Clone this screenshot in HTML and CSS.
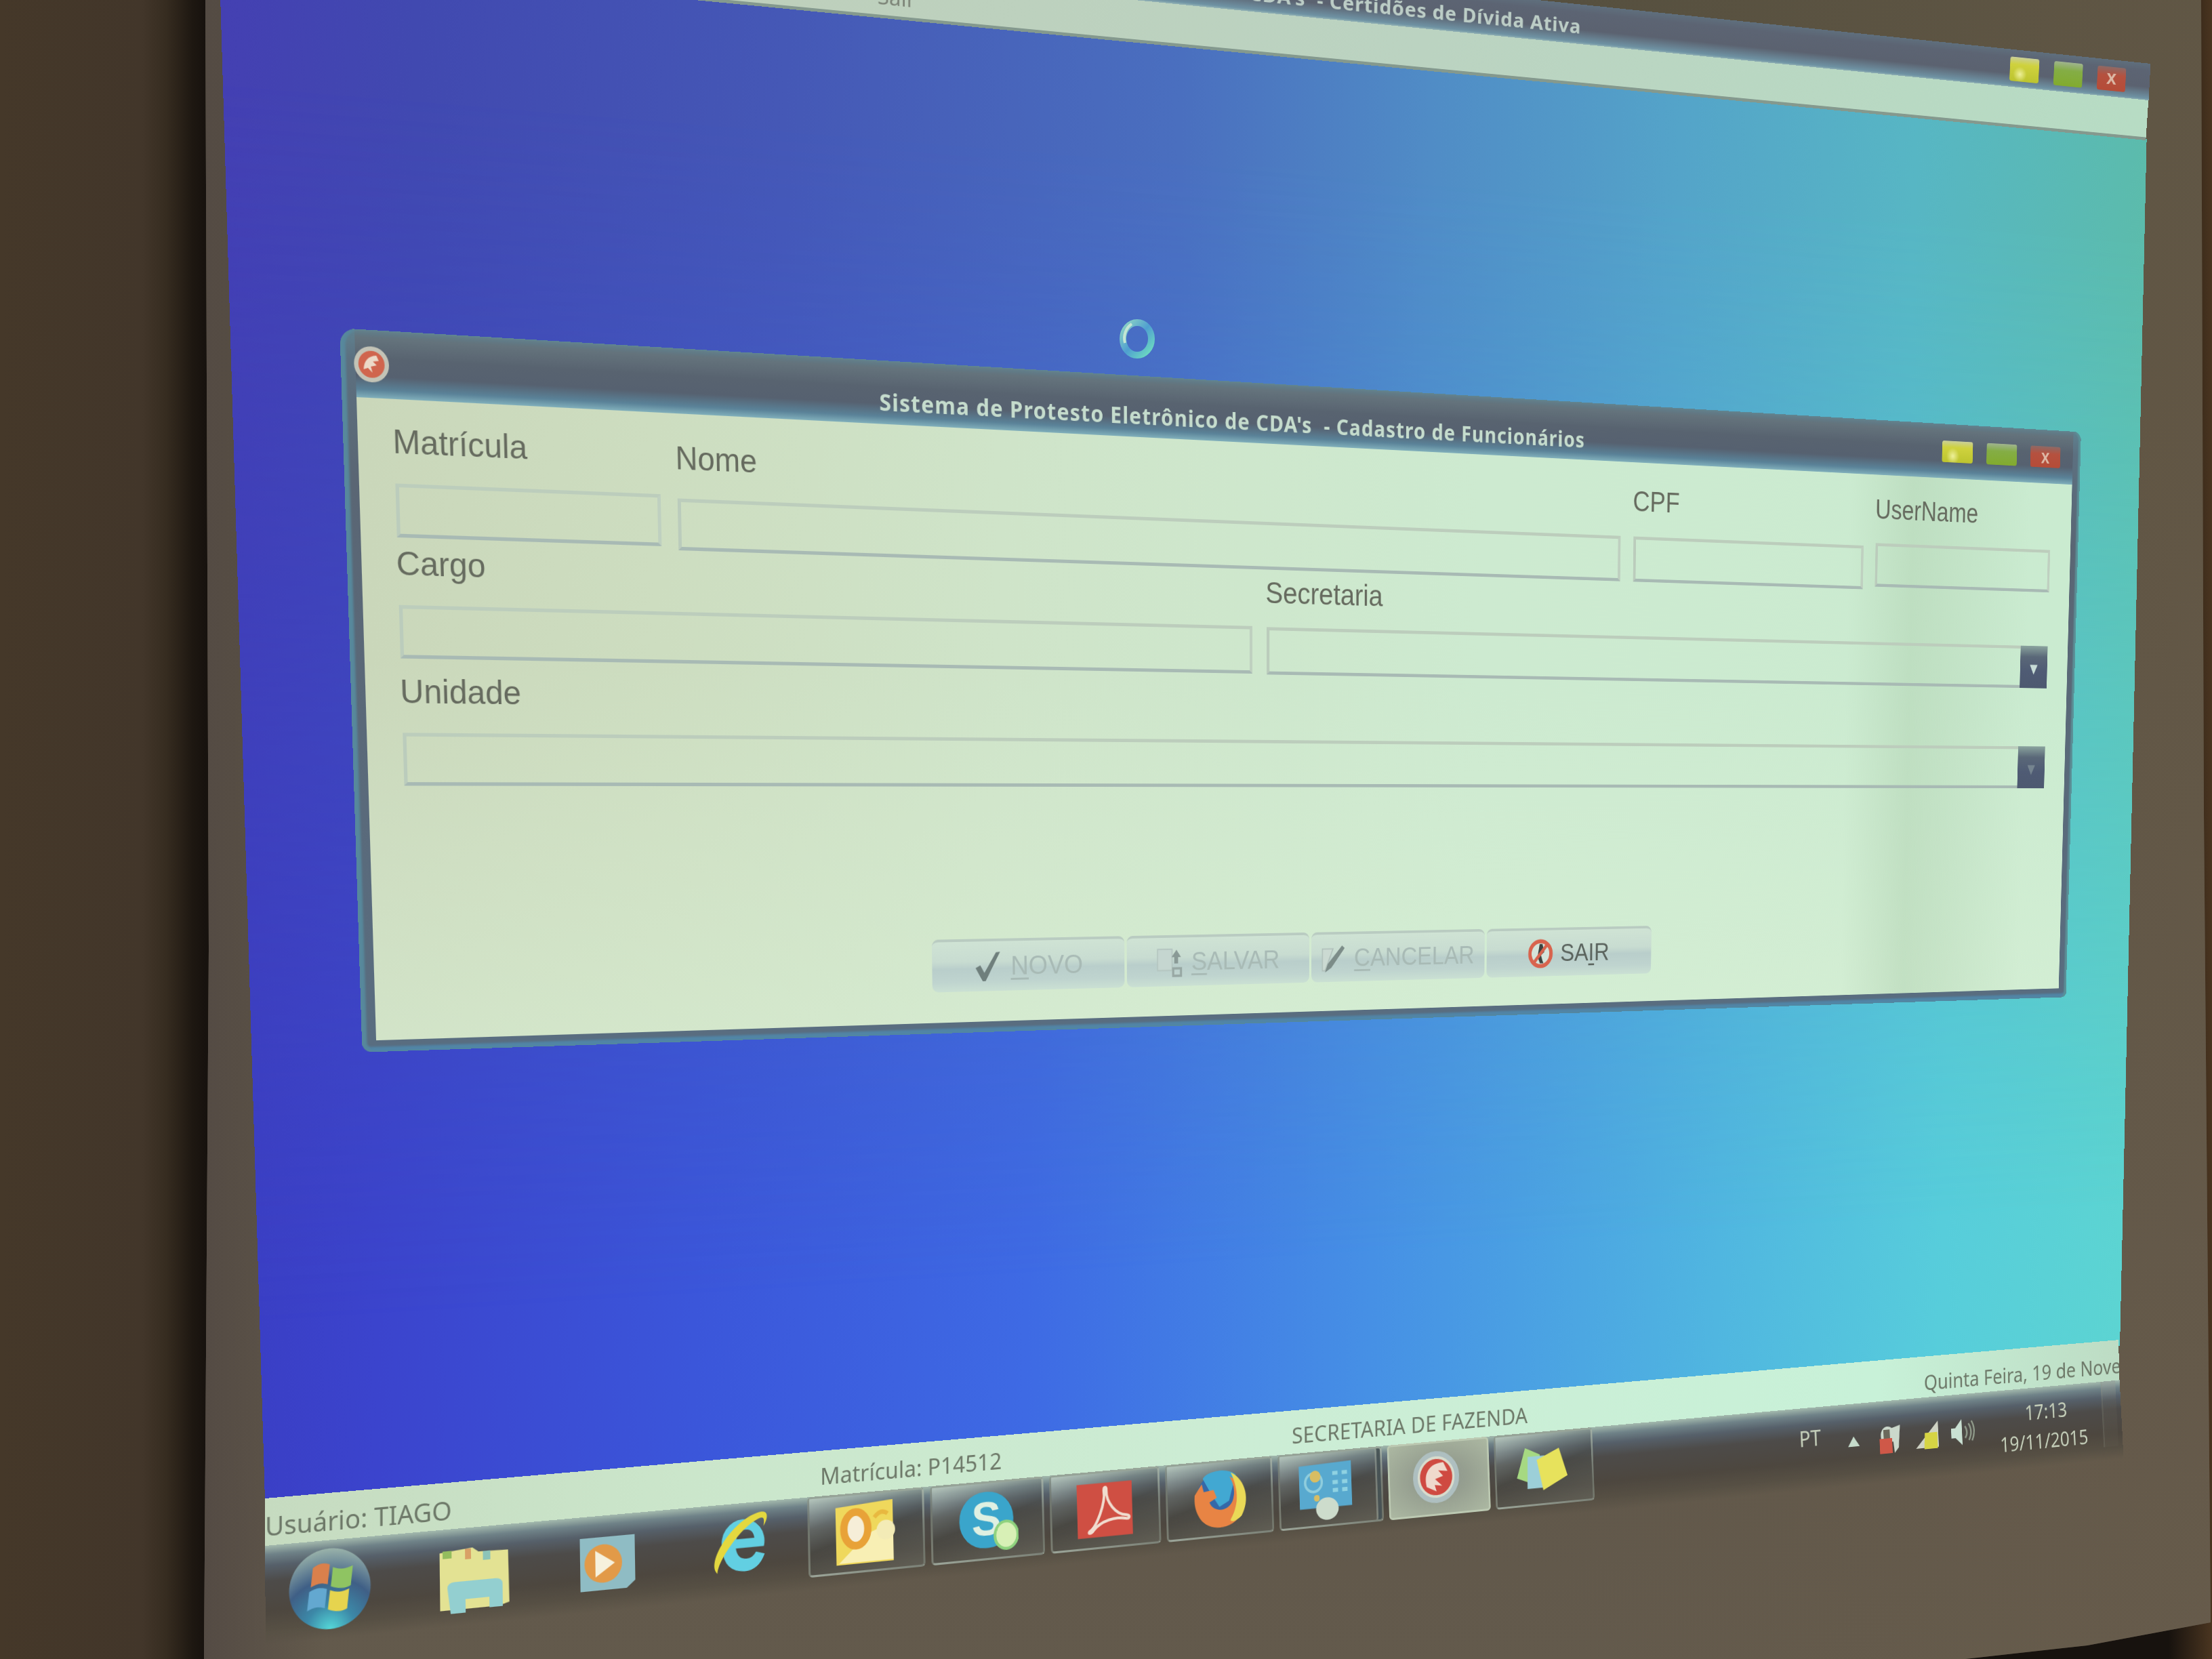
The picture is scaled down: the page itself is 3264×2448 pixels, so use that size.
FILE: index.html
```html
<!DOCTYPE html>
<html lang="pt-BR">
<head>
<meta charset="utf-8">
<title>Sistema de Protesto Eletrônico de CDA's</title>
<link rel="stylesheet" href="styles.css">
</head>
<body>
<main class="wall">
  <div class="screen"></div>

  <section class="plane desktop" data-quad="323,-75 3167,205 3127,1985 391,2216"></section>

  <header class="plane app-title" data-quad="318,-203 3173,94 3170,150 320,-133">
    <h1 class="app-name">Sistema de Protesto Eletrônico de CDA's&nbsp; - Certidões de Dívida Ativa</h1>
    <div class="controls">
      <i class="ctl yellow"></i><i class="ctl green"></i><i class="ctl red">x</i>
    </div>
  </header>
  <nav class="plane app-menu" data-quad="320,-134 3170,148 3166,207 322,-68">
    <span>Sair</span>
  </nav>

  <svg class="busy" viewBox="0 0 60 64">
    <defs><linearGradient id="ring" x1="0" y1="0" x2="1" y2="1"><stop offset="0" stop-color="#8fd6c4"/><stop offset=".5" stop-color="#4f9fd0"/><stop offset="1" stop-color="#6fe0bf"/></linearGradient></defs>
    <ellipse cx="30" cy="32" rx="21" ry="24" fill="none" stroke="url(#ring)" stroke-width="10"/>
    <path d="M12 38a21 24 0 0 1 10-28" fill="none" stroke="#c4e6d4" stroke-width="4"/>
  </svg>

  <section class="plane window" data-box="20,91,3000,880" data-quad="526,586 3057,715 3037,1458 555,1535">
    <header class="win-title">
      <svg class="win-icon" viewBox="0 0 50 50"><circle cx="25" cy="25" r="24" fill="#c3c3b6"/><circle cx="25" cy="25" r="18" fill="#d0654e"/><path d="M14 32c1-12 7-18 18-19l3 7-8 1 5 5-8 2 2 8-6-6z" fill="#ecd9c8"/></svg>
      <h2 class="win-name">Sistema de Protesto Eletrônico de CDA's&nbsp; - Cadastro de Funcionários</h2>
      <div class="controls">
        <i class="ctl yellow"></i><i class="ctl green"></i><i class="ctl red">x</i>
      </div>
    </header>
    <form class="form">
      <div class="row row-person">
        <label class="field"><span>Matrícula</span><b class="box"></b></label>
        <label class="field mid"><span>Nome</span><b class="box"></b></label>
        <label class="field mid"><span>CPF</span><b class="box"></b></label>
        <label class="field"><span>UserName</span><b class="box"></b></label>
      </div>
      <div class="row row-job">
        <label class="field"><span>Cargo</span><b class="box"></b></label>
        <label class="field mid"><span>Secretaria</span><b class="box combo"><i class="drop">▾</i></b></label>
      </div>
      <div class="row row-unit">
        <label class="field"><span>Unidade</span><b class="box combo"><i class="drop dim">▾</i></b></label>
      </div>
      <div class="actions">
        <span class="btn off"><svg viewBox="0 0 46 52"><path d="M2 28l8-4 7 12L37 4l7-1-25 46h-5z" fill="#6f7f7c"/></svg><span><u>N</u>OVO</span></span>
        <span class="btn off"><svg viewBox="0 0 46 52"><path d="M2 5h26v34H2z" fill="#c5d6d0" stroke="#b4c5c0" stroke-width="2"/><path d="M36 6l8 12h-5v10h-7V18h-5z" fill="#8a9a96"/><path d="M30 36h14v12H30z" fill="none" stroke="#98a8a4" stroke-width="4"/></svg><span><u>S</u>ALVAR</span></span>
        <span class="btn off"><svg viewBox="0 0 46 52"><path d="M3 10h20L8 46H3z" fill="#cbdad2" stroke="#b0c0ba" stroke-width="2"/><path d="M40 5l5 4-25 32-12 8 5-14z" fill="#7c8c88"/></svg><span><u>C</u>ANCELAR</span></span>
        <span class="btn"><svg viewBox="0 0 52 52"><circle cx="26" cy="26" r="22" fill="#d5e4da" stroke="#d8634d" stroke-width="7"/><path d="M24 9h6l4 14-7 6 5 14h-7l-5-11z" fill="#3c4240"/><path d="M40 10L12 42" stroke="#d8634d" stroke-width="6"/></svg><span>SA<u>I</u>R</span></span>
      </div>
    </form>
  </section>

  <footer class="plane status" data-quad="391,2211 3126,1977 3127,2037 391,2282">
    <span class="st-user">Usuário: TIAGO</span>
    <span class="st-id">Matrícula: P14512</span>
    <span class="st-dept">SECRETARIA DE FAZENDA</span>
    <span class="st-date">Quinta Feira, 19 de Novembro</span>
  </footer>

  <nav class="plane taskbar" data-quad="391,2281 3127,2036 3133,2152 392,2428">
    <div class="pins">
      <svg class="orb" viewBox="0 0 110 110"><defs><radialGradient id="orb" cx=".5" cy="1" r="1"><stop offset="0" stop-color="#55d8d8"/><stop offset=".3" stop-color="#3c89a8"/><stop offset=".62" stop-color="#3f5f86"/><stop offset="1" stop-color="#9ab3aa"/></radialGradient></defs><circle cx="55" cy="55" r="53" fill="url(#orb)"/><path d="M33 26c8-6 15-6 22-3l-3 26c-8-3-14-2-22 2z" fill="#d9804c"/><path d="M59 27c9 4 16 4 26 0l-3 26c-9 4-17 3-26-1z" fill="#8fc462"/><path d="M28 57c9-5 15-5 23-2l-3 25c-8-3-14-3-23 2z" fill="#63a8d0"/><path d="M55 57c9 4 16 4 25 0l-3 26c-9 4-16 3-25-1z" fill="#e6d44e"/></svg>
      <svg class="folder" viewBox="0 0 98 90"><path d="M4 6l44-4 8 6 40 1 1 70-14 4H4z" fill="#e3e293"/><path d="M8 4h12v10H8z" fill="#94bd5e"/><path d="M38 3h8v14h-8z" fill="#d9a066"/><path d="M62 8h10v12H62z" fill="#8cc4b8"/><path d="M14 54q0-8 10-8h54q10 0 10 8v30H70V70H38v18H18z" fill="#93cfd0"/></svg>
      <svg class="player" viewBox="0 0 80 76"><path d="M2 2h76v62l-12 10H2z" fill="#8fbcc4"/><circle cx="34" cy="38" r="26" fill="#e29a48"/><path d="M23 20l27 18-27 18z" fill="#f6f1dc"/></svg>
      <svg class="ie" viewBox="0 0 92 94"><path d="M20 54a32 33 0 1 1 62 0H40q2 16 16 16 9 0 14-9l13 4Q74 88 52 88 22 86 20 54zm21-13h27q-2-13-13-13t-14 13z" fill="#62cfe2"/><path d="M12 88C-6 72 34 14 74 5c16-4 16 8 8 20 2-12 0-14-8-11C48 24 12 70 12 88z" fill="#e4d83f"/></svg>
    </div>
    <div class="tasks">
      <span class="task bright"><svg viewBox="0 0 90 92"><path d="M2 8L88 2v88H2z" fill="#efd85c"/><path d="M50 48l38-14v54H6z" fill="#f8efb4"/><ellipse cx="32" cy="40" rx="18" ry="24" fill="#f6eed8" stroke="#e8a238" stroke-width="11"/><path d="M60 26q10-12 20-4" fill="none" stroke="#e8b840" stroke-width="6"/><circle cx="77" cy="45" r="14" fill="#f3ebb6"/></svg></span>
      <span class="task"><svg viewBox="0 0 90 86"><rect x="3" y="3" width="80" height="78" rx="38" fill="#3aa5cb"/><text x="43" y="63" class="glyph" text-anchor="middle">S</text><ellipse cx="72" cy="65" rx="17" ry="19" fill="#d8f0b6" stroke="#8fd27e" stroke-width="4"/></svg></span>
      <span class="task"><svg viewBox="0 0 90 86"><path d="M2 5h84v76H2z" fill="#cf4f43"/><path d="M20 72c10-4 26-38 23-56 0-6 5-6 4 0-1 17 14 36 30 37 6 1 5 6-1 5-16-4-38 0-50 13-4 5-9 4-6 1z" fill="none" stroke="#f0dccf" stroke-width="4"/></svg></span>
      <span class="task"><svg viewBox="0 0 90 92"><circle cx="45" cy="44" r="38" fill="#3568a8"/><path d="M18 14C26 2 60 0 72 12L60 50 44 58 30 36z" fill="#42a8d2"/><path d="M4 38l12-16 3 12 16-2 5 12-12 6c5 16 32 18 39-2 4-14 0-24-5-34 20 10 28 32 21 50-10 30-58 34-73 6C4 60 3 50 4 38z" fill="#e88444"/><path d="M64 8c26 14 30 44 16 66-12 10-20 8-18 4 12-18 16-40 2-70z" fill="#ead957"/></svg></span>
      <span class="task stacked"><svg viewBox="0 0 94 92"><path d="M2 6l88-3v68H2z" fill="#58a9cf"/><circle cx="26" cy="32" r="14" fill="none" stroke="#8fcddd" stroke-width="4"/><circle cx="29" cy="23" r="9" fill="#d8bd62"/><path d="M58 20h9M74 20h9M58 34h9M74 34h9M58 46h9M74 46h9" stroke="#8fd2e2" stroke-width="6"/><circle cx="31" cy="56" r="5" fill="#d8bd62"/><ellipse cx="48" cy="73" rx="19" ry="17" fill="#cddccc"/></svg></span>
      <span class="task active"><svg viewBox="0 0 84 84"><circle cx="42" cy="42" r="36" fill="#d8dccd" stroke="#aebfc0" stroke-width="8"/><circle cx="42" cy="42" r="28" fill="#cf4a41"/><path d="M25 56c-5-22 6-36 30-36l7 14-16-2 8 9-14 4 12 11-13-2 3 10z" fill="#efd9cc"/></svg></span>
      <span class="task"><svg viewBox="0 0 94 72"><path d="M18 2l26 12-6 48L2 48z" fill="#a6d982"/><path d="M22 16h30l-4 50H20z" fill="#9ccfd8"/><path d="M38 22l40-16 14 44-44 20z" fill="#e7e25c"/></svg></span>
    </div>
    <div class="tray">
      <span class="lang">PT</span>
      <svg class="up" viewBox="0 0 22 16"><path d="M11 0l11 16H0z" fill="#c6dccb"/></svg>
      <svg class="flag" viewBox="0 0 44 46"><path d="M6 26C0 6 16-2 26 6l16-4-4 36-8 8-2-18z" fill="#cbd8cb"/><path d="M10 8h12v14H10z" fill="#6b695c"/><path d="M2 22h24v24H2z" fill="#cf5848"/></svg>
      <svg class="net" viewBox="0 0 46 46"><path d="M44 0v42H0z" fill="#cfd3c4"/><path d="M18 18h24v26H16z" fill="#d6d444"/></svg>
      <svg class="vol" viewBox="0 0 46 42"><path d="M0 14h8L21 0v42L8 30H0z" fill="#c9e0d2"/><path d="M27 12q7 10 0 19M34 8q9 13 0 27M40 4q9 16 0 32" fill="none" stroke="#8f9a8a" stroke-width="3"/></svg>
      <div class="clock"><span>17:13</span><span>19/11/2015</span></div>
      <i class="peek"></i>
    </div>
  </nav>
</main>
<script src="planes.js"></script>
</body>
</html>
```

FILE: styles.css
```css
* { box-sizing: border-box; }
html, body { margin: 0; }
body {
  width: 3264px;
  height: 2448px;
  overflow: hidden;
  font-family: "Liberation Sans", Arial, sans-serif;
}
h1, h2 { margin: 0; }
i, b { font-style: normal; font-weight: normal; }

/* room wall and the projection canvas */
.wall {
  position: relative;
  width: 3264px;
  height: 2448px;
  overflow: hidden;
  background: linear-gradient(90deg, #453829 0, #42362a 210px, #362c20 245px, #1d1711 285px, #17120e 303px, #17120e 3200px, #4a3520 3264px);
}
.screen {
  width: 3264px;
  height: 2448px;
  clip-path: polygon(303px 0, 3248px 0, 3252px 1200px, 3262px 2394px, 3080px 2428px, 2900px 2448px, 301px 2448px, 308px 1400px);
  background:
    linear-gradient(90deg, transparent 2300px, rgba(105, 92, 74, .55) 3264px),
    linear-gradient(180deg, #56503f 0, #59503f 600px, #60574a 2050px, #635a4c 2448px);
}
.screen::before {
  content: "";
  display: block;
  width: 480px;
  height: 100%;
  background: linear-gradient(90deg, rgba(84, 75, 68, 1) 300px, transparent);
}

.plane { position: absolute; left: 0; top: 0; transform-origin: 0 0; width: 3000px; }

/* desktop background */
.desktop {
  height: 2200px;
  background: linear-gradient(91deg, #3a3ec4 0, #3b44cd 6%, #3b56da 20%, #3e6ae4 36%, #4690e5 54%, #50b6e0 74%, #57cddb 88%, #5cd4d2 100%);
}
.desktop::before {
  content: "";
  display: block;
  height: 100%;
  background: linear-gradient(91deg, #4440b2 0, #4149b0 8%, #4558b6 24%, #4a6fbf 43%, #508cc6 56%, #54a4c9 70%, #57b6c4 84%, #5cbcaa 100%);
  -webkit-mask-image: linear-gradient(180deg, #000 8%, rgba(0, 0, 0, .6) 40%, transparent 88%);
  mask-image: linear-gradient(180deg, #000 8%, rgba(0, 0, 0, .6) 40%, transparent 88%);
}

/* main application frame */
.app-title {
  height: 64px;
  display: flex;
  align-items: center;
  background: linear-gradient(180deg, #5f6f7d 0, #5c6473 20%, #5b6270 62%, #6f93a4 92%, #a4c1bd 100%);
}
.app-name {
  flex: 1;
  padding: 4px 0 0 884px;
  font: bold 31px/40px "Noto Sans", sans-serif;
  letter-spacing: .9px;
  white-space: nowrap;
  color: #bccdc6;
}
.app-title .controls { padding-right: 46px; gap: 28px; }
.app-title .ctl { width: 54px; height: 40px; }
.app-menu {
  height: 66px;
  padding-left: 958px;
  font: 32px/66px "Noto Sans", sans-serif;
  color: #7d8578;
  background: linear-gradient(90deg, #c0cdb8, #bbd3c1 60%, #b7dcc4);
  border-bottom: 5px solid #84998e;
}

.controls { display: flex; align-items: center; gap: 30px; }
.ctl {
  width: 66px;
  height: 36px;
  border-radius: 4px;
  font: bold 34px/34px "Liberation Sans", sans-serif;
  text-align: center;
}
.ctl.yellow { background: radial-gradient(circle at 35% 70%, #eef09a 0, transparent 28%), linear-gradient(#c9cf9a 0, #cfd23e 30%, #bcc42f); }
.ctl.green { background: linear-gradient(#9fb48e 0, #84ad45 35%, #82ab2e); }
.ctl.red { background: linear-gradient(#8d6a66 0, #b5513f 35%, #b54c38); color: #dcb8a6; }

.busy { position: absolute; left: 1648px; top: 468px; width: 60px; height: 64px; }

/* employee registration window */
.window {
  width: 3037px;
  height: 987px;
  padding: 0 17px 16px 20px;
  border-radius: 22px 16px 10px 14px;
  background: linear-gradient(180deg, #5f8290 0, #5c7080 4%, #5a6674 20%, #596d80 100%);
  box-shadow: inset 7px 0 3px #57889c, inset -5px 0 3px #5b9198, inset 0 -7px 3px #5185a6, inset 0 3px 2px #68808c;
}
.win-title {
  height: 91px;
  display: flex;
  align-items: center;
  background: linear-gradient(180deg, transparent 0, #64737c 12%, #586370 42%, #566170 68%, #5a8298 88%, #80afbb 100%);
}
.win-icon { width: 50px; height: 50px; margin-left: -3px; }
.win-name {
  flex: 1;
  padding: 27px 0 0 719px;
  font: bold 34px/40px "Noto Sans", sans-serif;
  letter-spacing: 1.3px;
  white-space: nowrap;
  color: #c5dccd;
}
.win-title .controls { padding-right: 28px; }

.form {
  width: 3000px;
  height: 880px;
  padding: 31px 45px 0 50px;
  background:
    linear-gradient(90deg, transparent 84%, rgba(172, 205, 172, .42) 88.5%, rgba(172, 205, 172, .3) 91%, transparent 97%),
    linear-gradient(180deg, transparent 40%, rgba(218, 240, 214, .5) 100%),
    linear-gradient(90deg, #cad7ba 0, #cdddc0 14%, #cfe4c9 32%, #cdead0 60%, #caebd0 100%);
}
.row { display: grid; }
.row-person { grid-template-columns: 380px 1606px 466px 378px; column-gap: 25px; }
.row-job { grid-template-columns: 1332px 1fr; column-gap: 25px; margin-top: 9px; }
.row-unit { margin-top: 18px; }
.field { display: flex; flex-direction: column; gap: 31px; font-size: 46px; line-height: 52px; color: #666b5f; }
.mid { padding-top: 5px; margin-bottom: -5px; }
.row-job .mid { gap: 27px; margin-bottom: 0; }
.field > span { margin-left: -2px; }
.box {
  display: flex;
  justify-content: flex-end;
  height: 73px;
  border: 5px solid;
  border-color: #bccdbc #bfd0c0 #a8bab4 #bbccbc;
}
.combo { border-right: 0; }
.drop {
  width: 60px;
  margin: -5px 0;
  background: linear-gradient(#8aa39e 0, #5a6878 26%, #4f5b74 60%, #4d5970);
  color: #c7dcd6;
  font: 34px/76px "DejaVu Sans", sans-serif;
  text-align: center;
}
.drop.dim { color: #75848f; }

.actions { display: flex; gap: 4px; margin: 228px 0 0 789px; }
.btn {
  width: 320px;
  height: 79px;
  display: flex;
  align-items: center;
  justify-content: center;
  gap: 14px;
  padding-right: 4px;
  border-radius: 10px;
  font-size: 41px;
  color: #5b645e;
  border-top: 4px solid #b9cbc1;
  background: linear-gradient(180deg, #cfe3d4 0, #c8dcd1 40%, #b9cecb 55%, #bfd4cf 80%, #cae0d3 100%);
}
.btn svg { width: 48px; height: 50px; }
.btn.off { color: #a8bab5; }
.btn u { text-decoration-thickness: 3px; text-underline-offset: 5px; }

/* application status strip */
.status {
  height: 66px;
  display: grid;
  grid-template-columns: 779px 736px 1112px 1fr;
  align-items: start;
  overflow: hidden;
  white-space: nowrap;
  font: 33px/50px "Noto Sans", sans-serif;
  color: #6d7868;
  background: linear-gradient(90deg, #c6dbc0 0, #cbe6cb 20%, #ccedd5 50%, #c8f1d8 85%, #bddcc4 100%);
}
.st-user { margin-top: 14px; font-size: 36px; }
.st-id { margin-top: 12px; padding-left: 18px; }
.st-dept { margin-top: 13px; padding-left: 22px; letter-spacing: .2px; }
.st-date { margin-top: 17px; padding-left: 7px; overflow: hidden; font-size: 32px; }

/* taskbar */
.taskbar {
  height: 130px;
  display: flex;
  background: linear-gradient(180deg, #a3b9ad 0, #6f8288 9%, #56606a 20%, #4d4b49 36%, #4d473f 66%, #575044 86%, rgba(93, 85, 72, 0) 100%);
}
.pins { width: 740px; display: flex; align-items: flex-start; padding-left: 27px; }
.orb { width: 113px; height: 110px; margin-top: 9px; }
.folder { width: 98px; height: 90px; margin: 25px 0 0 84px; }
.player { width: 80px; height: 76px; margin: 27px 0 0 94px; }
.ie { width: 88px; height: 94px; margin: 8px 0 0 102px; }
.tasks { display: flex; gap: 9px; }
.task {
  width: 172px;
  height: 112px;
  display: flex;
  align-items: center;
  justify-content: center;
  border: 3px solid rgba(150, 160, 145, .5);
  border-top-color: rgba(180, 195, 180, .5);
  border-radius: 6px;
  background: linear-gradient(165deg, rgba(190, 205, 195, .75) 0, rgba(120, 130, 128, .5) 28%, rgba(70, 72, 68, .5) 50%, rgba(105, 106, 98, .55) 100%);
}
.task svg { width: 92px; height: 90px; }
.task.bright { padding-right: 6px; }
.task.stacked { box-shadow: inset -9px 0 0 -3px rgba(60, 72, 76, .8), inset -12px 0 0 -3px rgba(150, 160, 150, .6); padding: 6px 16px 0 0; }
.task.active {
  background: radial-gradient(ellipse at 50% 50%, #8b948d 0, #969f90 40%, #acb8a2 100%);
  border-color: #bcc9b2;
}
.task.active svg { width: 84px; height: 82px; margin: -4px 10px 0 0; }
.task:last-child svg { height: 72px; margin-right: 8px; }
.glyph { font: bold 66px "Liberation Sans", sans-serif; fill: #dff0e2; }

.tray { flex: 1; display: flex; align-items: flex-start; padding-left: 374px; color: #c5cfba; }
.lang { width: 91px; margin-top: 24px; font: 35px/48px "Noto Sans", sans-serif; }
.up { width: 22px; height: 16px; margin: 52px 36px 0 0; }
.flag { width: 44px; height: 46px; margin: 38px 27px 0 0; }
.net { width: 46px; height: 46px; margin: 39px 23px 0 0; }
.vol { width: 46px; height: 42px; margin: 40px 48px 0 0; }
.clock { width: 176px; display: flex; flex-direction: column; align-items: center; padding-top: 16px; font: 33px/48px "Noto Sans", sans-serif; }
.clock span:first-child { padding-left: 12px; }
.peek { width: 30px; height: 108px; margin-left: 30px; border-left: 3px solid rgba(140, 145, 130, .2); background: linear-gradient(180deg, rgba(150, 160, 155, .6), rgba(110, 105, 92, .2) 30%, rgba(110, 105, 92, .1)); }
```

FILE: planes.js
```javascript
// Projects every flat plane onto its four corners (TL TR BR BL) with a homography.
document.querySelectorAll('.plane').forEach(function (el) {
  var q = el.dataset.quad.split(' ').map(function (p) { return p.split(',').map(Number); });
  var box = el.dataset.box ? el.dataset.box.split(',').map(Number) : [0, 0, el.offsetWidth, el.offsetHeight];
  var dx1 = q[1][0] - q[2][0], dx2 = q[3][0] - q[2][0], dx3 = q[0][0] - q[1][0] + q[2][0] - q[3][0];
  var dy1 = q[1][1] - q[2][1], dy2 = q[3][1] - q[2][1], dy3 = q[0][1] - q[1][1] + q[2][1] - q[3][1];
  var det = dx1 * dy2 - dx2 * dy1;
  var g = (dx3 * dy2 - dx2 * dy3) / det, h = (dx1 * dy3 - dx3 * dy1) / det;
  var rows = [
    [q[1][0] - q[0][0] + g * q[1][0], q[3][0] - q[0][0] + h * q[3][0], q[0][0]],
    [q[1][1] - q[0][1] + g * q[1][1], q[3][1] - q[0][1] + h * q[3][1], q[0][1]],
    [g, h, 1]
  ].map(function (r) {
    var a = r[0] / box[2], b = r[1] / box[3];
    return [a, b, r[2] - a * box[0] - b * box[1]];
  });
  var X = rows[0], Y = rows[1], W = rows[2];
  el.style.transform = 'matrix3d(' + [X[0], Y[0], 0, W[0], X[1], Y[1], 0, W[1], 0, 0, 1, 0, X[2], Y[2], 0, W[2]].join(',') + ')';
});
```
